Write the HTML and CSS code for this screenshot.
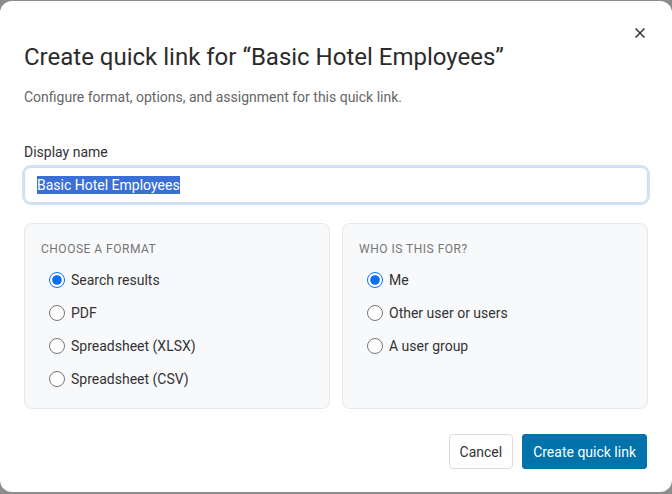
FILE: index.html
```html
<!DOCTYPE HTML>
<html>
<head>
    <meta charset="UTF-8">
    <title>Create quick link</title>
    <link rel="stylesheet" href="styles.css">
</head>
<body>
    <div class="dialog">
        <button class="close" aria-label="Close">
            <svg width="12" height="12" viewBox="0 0 12 12"><path d="M1.5 1.5L10.5 10.5M10.5 1.5L1.5 10.5" stroke="#333" stroke-width="1.5" fill="none"/></svg>
        </button>
        <h1 class="title">Create quick link for “Basic Hotel Employees”</h1>
        <p class="sub">Configure format, options, and assignment for this quick link.</p>

        <p class="label">Display name</p>
        <div class="input"><span class="sel">Basic Hotel Employees</span></div>

        <div class="panels">
            <div class="panel">
                <p class="head">Choose a format</p>
                <label class="opt"><input type="radio" name="fmt" checked>Search results</label>
                <label class="opt"><input type="radio" name="fmt">PDF</label>
                <label class="opt"><input type="radio" name="fmt">Spreadsheet (XLSX)</label>
                <label class="opt"><input type="radio" name="fmt">Spreadsheet (CSV)</label>
            </div>
            <div class="panel">
                <p class="head">Who is this for?</p>
                <label class="opt"><input type="radio" name="who" checked>Me</label>
                <label class="opt"><input type="radio" name="who">Other user or users</label>
                <label class="opt"><input type="radio" name="who">A user group</label>
            </div>
        </div>

        <div class="actions">
            <button class="btn">Cancel</button>
            <button class="btn primary">Create quick link</button>
        </div>
    </div>
</body>
</html>
```

FILE: styles.css
```css
html,body{margin:0;padding:0;}
body{
    background:#8c8c8c;
    font-family:Roboto,"Liberation Sans",sans-serif;
    color:#333;
}
p,h1{margin:0;}

.dialog{
    position:relative;
    box-sizing:border-box;
    height:491px;
    margin-top:1px;
    padding:40px 24px 0;
    background:#fff;
    border-radius:12px;
}
.close{
    position:absolute;
    top:26px;
    right:26px;
    width:12px;
    height:12px;
    padding:0;
    border:none;
    background:none;
}
.close svg{display:block;}

.title{
    font-size:24px;
    line-height:32px;
    font-weight:400;
    color:#2b2b2b;
}
.sub{
    margin-top:14px;
    font-size:14px;
    line-height:20px;
    color:#666;
}
.label{
    margin-top:35px;
    font-size:14px;
    line-height:20px;
    color:#333;
}
.input{
    box-sizing:border-box;
    height:36px;
    margin-top:5px;
    padding:0 12px;
    border:1px solid #d6dbe1;
    border-radius:7px;
    box-shadow:0 0 0 2px #cfe1fb;
    font-size:14px;
    line-height:34px;
}
.sel{
    background:#3a6fd6;
    color:#fff;
    padding:1px 0;
}

.panels{
    display:grid;
    grid-template-columns:1fr 1fr;
    gap:12px;
    margin-top:20px;
}
.panel{
    padding:17px 16px 13px;
    background:#f8f9fb;
    border:1px solid #e6e8eb;
    border-radius:8px;
}
.head{
    font-size:12px;
    line-height:16px;
    letter-spacing:.5px;
    text-transform:uppercase;
    color:#767676;
    margin-bottom:6px;
}
.opt{
    display:flex;
    align-items:center;
    height:33px;
    padding-left:8px;
    font-size:14px;
    color:#333;
}
.opt input{
    width:16px;
    height:16px;
    margin:0 6px 0 0;
    accent-color:#0b6ff5;
}

.actions{
    display:flex;
    justify-content:flex-end;
    gap:9px;
    margin-top:25px;
    padding-right:1px;
}
.btn{
    height:35px;
    padding:0 10px;
    border:1px solid #dcdcdc;
    border-radius:4px;
    background:#fff;
    font-family:inherit;
    font-size:14px;
    color:#333;
}
.btn.primary{
    border-color:#0073aa;
    background:#0073aa;
    color:#fff;
    border-radius:3px;
}
```
